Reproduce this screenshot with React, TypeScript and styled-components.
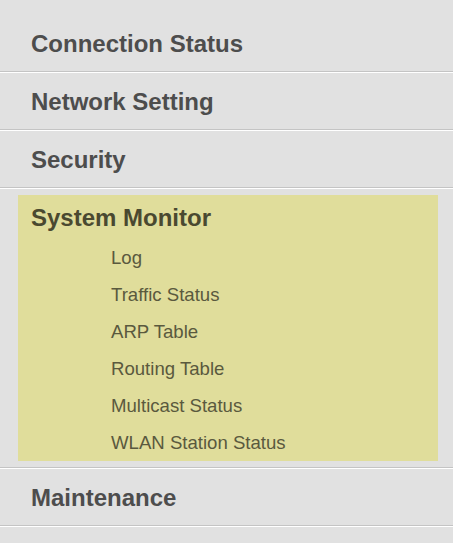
import React from "react";
import styled, { createGlobalStyle } from "styled-components";

const GlobalStyle = createGlobalStyle`
  html, body {
    margin: 0;
    padding: 0;
    background: #ffffff;
  }
  body {
    font-family: "Liberation Sans", Arial, sans-serif;
  }
`;

const Sidebar = styled.ul`
  list-style: none;
  margin: 0;
  padding: 15px 0 0;
  width: 453px;
  min-height: 100vh;
  box-sizing: border-box;
  background: #e1e1e1;
`;

const MenuItem = styled.li`
  padding: 6px 15px 8px 18px;
  box-shadow: inset 0 -1px 0 #ffffff, inset 0 -2px 0 #c4c4c4;
`;

const MenuBox = styled.div<{ $active?: boolean }>`
  padding: 0 13px;
  background: ${(p) => (p.$active ? "#e0dd9b" : "transparent")};
`;

const MenuTitle = styled.div<{ $active?: boolean }>`
  height: 44px;
  line-height: 46px;
  font-size: 24px;
  font-weight: 700;
  color: ${(p) => (p.$active ? "#4a4930" : "#4d4d4d")};
  cursor: pointer;
`;

const SubList = styled.ul`
  list-style: none;
  margin: 0;
  padding: 0 0 0 80px;
`;

const SubItem = styled.li`
  height: 37px;
  line-height: 38px;
  font-size: 18.6px;
  color: #5a593e;
  cursor: pointer;
`;

interface IMenu {
  title: string;
  items?: string[];
}

const menus: IMenu[] = [
  { title: "Connection Status" },
  { title: "Network Setting" },
  { title: "Security" },
  {
    title: "System Monitor",
    items: [
      "Log",
      "Traffic Status",
      "ARP Table",
      "Routing Table",
      "Multicast Status",
      "WLAN Station Status",
    ],
  },
  { title: "Maintenance" },
];

const App = () => (
  <>
    <GlobalStyle />
    <Sidebar>
      {menus.map((menu) => {
        const active = !!menu.items;
        return (
          <MenuItem key={menu.title}>
            <MenuBox $active={active}>
              <MenuTitle $active={active}>{menu.title}</MenuTitle>
              {menu.items && (
                <SubList>
                  {menu.items.map((item) => (
                    <SubItem key={item}>{item}</SubItem>
                  ))}
                </SubList>
              )}
            </MenuBox>
          </MenuItem>
        );
      })}
    </Sidebar>
  </>
);

export default App;
